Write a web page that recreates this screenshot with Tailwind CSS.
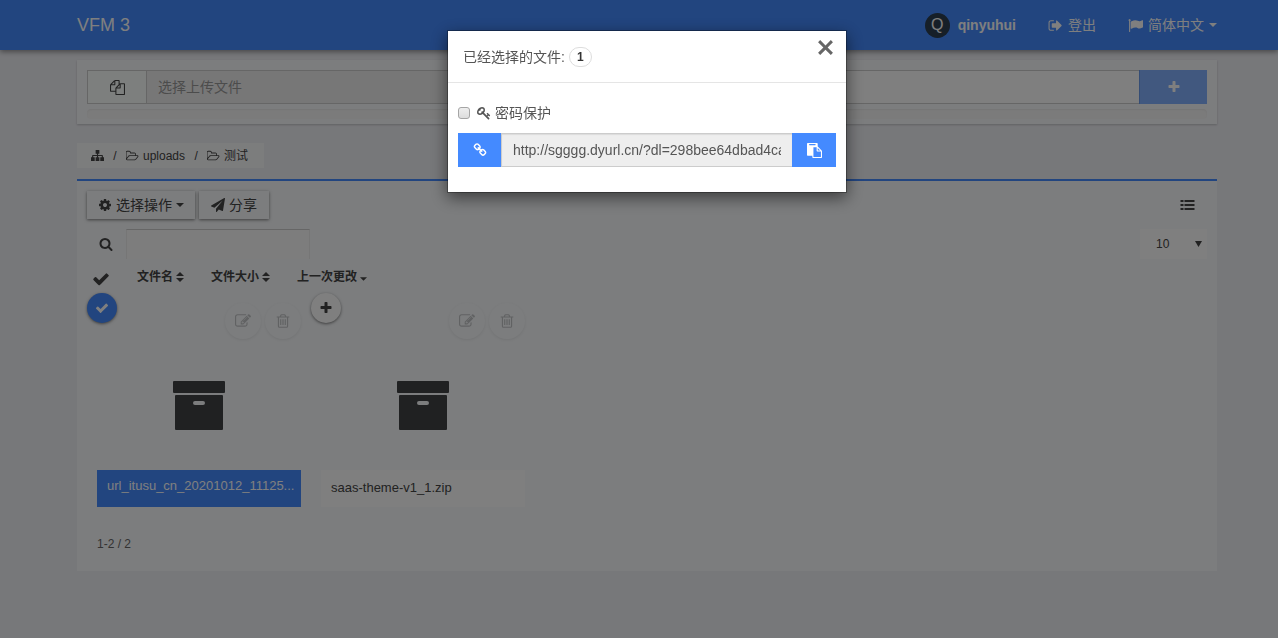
<!DOCTYPE html>
<html lang="zh-CN">
<head>
    <meta charset="UTF-8">
    <meta name="viewport" content="width=device-width, initial-scale=1.0">
    <title>VFM 3</title>
    <script src="https://cdn.jsdelivr.net/npm/@tailwindcss/browser@4"></script>
</head>
<body class="min-h-screen bg-[#eff0f5] fill-current font-['Liberation_Sans','Noto_Sans_CJK_SC',sans-serif] text-sm leading-5 text-[#444]">
    <!-- icons -->
    <svg class="hidden">
        <symbol id="plus" viewBox="0 0 1792 1792"><path d="M1600 736v192q0 40-28 68t-68 28h-416v416q0 40-28 68t-68 28h-192q-40 0-68-28t-28-68v-416h-416q-40 0-68-28t-28-68v-192q0-40 28-68t68-28h416v-416q0-40 28-68t68-28h192q40 0 68 28t28 68v416h416q40 0 68 28t28 68z"/></symbol>
        <symbol id="check" viewBox="0 0 1792 1792"><path d="M1671 566q0 40-28 68l-724 724-136 136q-28 28-68 28t-68-28l-136-136-362-362q-28-28-28-68t28-68l136-136q28-28 68-28t68 28l294 295 656-657q28-28 68-28t68 28l136 136q28 28 28 68z"/></symbol>
        <symbol id="times" viewBox="0 0 16 16"><path d="M3 1l5 5 5-5 2 2-5 5 5 5-2 2-5-5-5 5-2-2 5-5-5-5z"/></symbol>
        <symbol id="search" viewBox="0 0 1792 1792"><path d="M1216 832q0-185-131.500-316.500t-316.500-131.500-316.500 131.500-131.500 316.500 131.500 316.500 316.500 131.500 316.500-131.500 131.500-316.500zm512 832q0 52-38 90t-90 38q-54 0-90-38l-343-342q-179 124-399 124-143 0-273.500-55.500t-225-150-150-225-55.500-273.500 55.500-273.500 150-225 225-150 273.500-55.500 273.500 55.500 225 150 150 225 55.500 273.500q0 220-124 399l343 343q37 37 37 90z"/></symbol>
        <symbol id="cog" viewBox="0 0 1792 1792"><path d="M1152 896q0-106-75-181t-181-75-181 75-75 181 75 181 181 75 181-75 75-181zm512-109v222q0 12-8 23t-20 13l-185 28q-19 54-39 91 35 50 107 138 10 12 10 25t-9 23q-27 37-99 108t-94 71q-12 0-26-9l-138-108q-44 23-91 38-16 136-29 186-7 28-36 28h-222q-14 0-24.500-8.500t-11.500-21.500l-28-184q-49-16-90-37l-141 107q-10 9-25 9-14 0-25-11-126-114-165-168-7-10-7-23 0-12 8-23 15-21 51-66.500t54-70.500q-27-50-41-99l-183-27q-13-2-21-12.500t-8-23.500v-222q0-12 8-23t19-13l186-28q14-46 39-92-40-57-107-138-10-12-10-24 0-10 9-23 26-36 98.500-107.500t94.500-71.500q13 0 26 10l138 107q44-23 91-38 16-136 29-186 7-28 36-28h222q14 0 24.500 8.500t11.500 21.500l28 184q49 16 90 37l142-107q9-9 24-9 13 0 25 10 129 119 165 170 7 8 7 22 0 12-8 23-15 21-51 66.500t-54 70.500q26 50 41 98l183 28q13 2 21 12.500t8 23.500z"/></symbol>
        <symbol id="plane" viewBox="0 0 1792 1792"><path d="M1764 11q33 24 27 64l-256 1536q-5 29-32 45-14 8-31 8-11 0-24-5l-453-185-242 295q-18 23-49 23-13 0-22-4-19-7-30.500-23.500t-11.500-36.500v-349l864-1059-1069 925-395-162q-37-14-40-55-2-40 32-59l1664-960q15-9 32-9 20 0 36 11z"/></symbol>
        <symbol id="sign-out" viewBox="0 0 1792 1792"><path d="M704 1440q0 4 1 20t.5 26.500-3 23.500-10 19.500-20.500 6.500h-320q-119 0-203.500-84.500t-84.500-203.500v-704q0-119 84.500-203.500t203.500-84.500h320q13 0 22.500 9.500t9.500 22.500q0 4 1 20t.5 26.500-3 23.500-10 19.500-20.500 6.500h-320q-66 0-113 47t-47 113v704q0 66 47 113t113 47h312l11.500 1 11.500 3 8 5.500 7 9 2 13.500zm928-544q0 26-19 45l-544 544q-19 19-45 19t-45-19-19-45v-288h-448q-26 0-45-19t-19-45v-384q0-26 19-45t45-19h448v-288q0-26 19-45t45-19 45 19l544 544q19 19 19 45z"/></symbol>
        <symbol id="flag" viewBox="0 0 1792 1792"><path d="M320 256q0 72-64 110v1266q0 13-9.500 22.500t-22.500 9.500h-64q-13 0-22.500-9.500t-9.500-22.500v-1266q-64-38-64-110 0-53 37.500-90.500t90.500-37.500 90.500 37.500 37.500 90.500zm1472 64v763q0 25-12.500 38.500t-39.500 27.500q-215 116-369 116-61 0-123.500-22t-108.500-48-115.500-48-142.500-22q-192 0-464 146-17 9-33 9-26 0-45-19t-19-45v-742q0-32 31-55 21-14 79-43 236-120 421-120 107 0 200 29t219 88q38 19 88 19 54 0 117.500-21t110-47 88-47 54.500-21q26 0 45 19t19 45z"/></symbol>
        <symbol id="folder" viewBox="0 0 1920 1792"><path d="M1717 931q0-35-53-35h-1088q-40 0-85.500 21.500t-71.500 52.500l-294 363q-18 24-18 40 0 35 53 35h1088q40 0 86-22t71-53l294-363q18-22 18-39zm-1141-163h768v-160q0-40-28-68t-68-28h-576q-40 0-68-28t-28-68v-64q0-40-28-68t-68-28h-320q-40 0-68 28t-28 68v853l256-315q44-53 116-87.500t140-34.500zm1269 163q0 62-46 120l-295 363q-43 53-116 87.500t-140 34.500h-1088q-92 0-158-66t-66-158v-960q0-92 66-158t158-66h320q92 0 158 66t66 158v32h544q92 0 158 66t66 158v160h192q54 0 99 24.500t67 70.500q15 32 15 68z"/></symbol>
        <symbol id="files" viewBox="0 0 1792 1792"><path d="M1696 384q40 0 68 28t28 68v1216q0 40-28 68t-68 28h-960q-40 0-68-28t-28-68v-288h-544q-40 0-68-28t-28-68v-672q0-40 20-88t48-76l408-408q28-28 76-48t88-20h416q40 0 68 28t28 68v328q68-40 128-40h416zm-544 213l-299 299h299v-299zm-640-384l-299 299h299v-299zm196 647l316-316v-416h-384v416q0 40-28 68t-68 28h-416v640h512v-256q0-40 20-88t48-76zm956 804v-1152h-384v416q0 40-28 68t-68 28h-416v640h896z"/></symbol>
        <symbol id="link" viewBox="0 0 1792 1792"><path d="M1520 1216q0-40-28-68l-208-208q-28-28-68-28-42 0-72 32 3 3 19 18.500t21.500 21.500 15 19 13 25.500 3.500 27.500q0 40-28 68t-68 28q-15 0-27.500-3.500t-25.500-13-19-15-21.500-21.500-18.500-19q-33 31-33 73 0 40 28 68l206 207q27 27 68 27 40 0 68-26l147-146q28-28 28-67zm-703-705q0-40-28-68l-206-207q-28-28-68-28-39 0-68 27l-147 146q-28 28-28 67 0 40 28 68l208 208q27 27 68 27 42 0 72-31-3-3-19-18.500t-21.500-21.500-15-19-13-25.500-3.500-27.500q0-40 28-68t68-28q15 0 27.500 3.500t25.500 13 19 15 21.500 21.500 18.500 19q33-31 33-73zm895 705q0 120-85 203l-147 146q-83 83-203 83-121 0-204-85l-206-207q-83-83-83-203 0-123 88-209l-88-88q-86 88-208 88-120 0-204-84l-208-208q-84-84-84-204t85-203l147-146q83-83 203-83 121 0 204 85l206 207q83 83 83 203 0 123-88 209l88 88q86-88 208-88 120 0 204 84l208 208q84 84 84 204z"/></symbol>
        <symbol id="paste" viewBox="0 0 1792 1792"><path d="M768 1664h896v-640h-416q-40 0-68-28t-28-68v-416h-384v1152zm256-1440v-64q0-13-9.500-22.500t-22.500-9.500h-704q-13 0-22.500 9.500t-9.500 22.500v64q0 13 9.500 22.500t22.500 9.500h704q13 0 22.500-9.500t9.500-22.500zm256 672h299l-299-299v299zm512 128v672q0 40-28 68t-68 28h-960q-40 0-68-28t-28-68v-160h-544q-40 0-68-28t-28-68v-1344q0-40 28-68t68-28h1088q40 0 68 28t28 68v328q21 13 36 28l408 408q28 28 48 76t20 88z"/></symbol>
        <symbol id="key" viewBox="0 0 1792 1792"><path d="M832 512q0-80-56-136t-136-56-136 56-56 136q0 42 19 83-41-19-83-19-80 0-136 56t-56 136 56 136 136 56 136-56 56-136q0-42-19-83 41 19 83 19 80 0 136-56t56-136zm851 704q0 17-49 66t-66 49q-9 0-28.500-16t-36.500-33-38.500-40-24.500-26l-96 96 220 220q28 28 28 68 0 42-39 81t-81 39q-40 0-68-28l-671-671q-176 131-365 131-163 0-265.500-102.500t-102.500-265.500q0-160 95-313t248-248 313-95q163 0 265.500 102.500t102.500 265.500q0 189-131 365l355 355 96-96q-3-3-26-24.500t-40-38.500-33-36.500-16-28.500q0-17 49-66t66-49q13 0 23 10 6 6 46 44.500t82 79.500 86.500 86 73 78 28.500 41z"/></symbol>
        <symbol id="edit" viewBox="0 0 1792 1792"><path d="M888 1184l116-116-152-152-116 116v56h96v96h56zm440-720q-16-16-33 1l-350 350q-17 17-1 33t33-1l350-350q17-17 1-33zm80 594v190q0 119-84.500 203.500t-203.500 84.500h-832q-119 0-203.500-84.500t-84.500-203.500v-832q0-119 84.500-203.500t203.500-84.500h832q63 0 117 25 15 7 18 23 3 17-9 29l-49 49q-14 14-32 8-23-6-45-6h-832q-66 0-113 47t-47 113v832q0 66 47 113t113 47h832q66 0 113-47t47-113v-126q0-13 9-22l64-64q15-15 35-7t20 29zm-96-738l288 288-672 672h-288v-288zm444 132l-92 92-288-288 92-92q28-28 68-28t68 28l152 152q28 28 28 68t-28 68z"/></symbol>
        <symbol id="trash" viewBox="0 0 1792 1792"><path d="M704 736v576q0 14-9 23t-23 9h-64q-14 0-23-9t-9-23v-576q0-14 9-23t23-9h64q14 0 23 9t9 23zm256 0v576q0 14-9 23t-23 9h-64q-14 0-23-9t-9-23v-576q0-14 9-23t23-9h64q14 0 23 9t9 23zm256 0v576q0 14-9 23t-23 9h-64q-14 0-23-9t-9-23v-576q0-14 9-23t23-9h64q14 0 23 9t9 23zm128 724v-948h-896v948q0 22 7 40.500t14.500 27 10.500 8.500h832q3 0 10.500-8.500t14.500-27 7-40.500zm-672-1076h448l-48-117q-7-9-17-11h-317q-10 2-17 11zm928 32v64q0 14-9 23t-23 9h-96v948q0 83-47 143.500t-113 60.500h-832q-66 0-113-58.500t-47-141.500v-952h-96q-14 0-23-9t-9-23v-64q0-14 9-23t23-9h309l70-167q15-37 54-63t79-26h320q40 0 79 26t54 63l70 167h309q14 0 23 9t9 23z"/></symbol>
        <symbol id="sitemap" viewBox="0 0 14 14"><path d="M5 1h4v4H7.600v1.400h4.400q.8 0 .8.8V9H14v4h-4V9h1.600V7.600h-4V9H9v4H5V9h1.400V7.600h-4V9H4v4H0V9h1.200V7.200q0-.8.8-.8h4.400V5H5z"/></symbol>
        <symbol id="list" viewBox="0 0 14 12"><path d="M0 1h3v2H0zM4 1h10v2H4zM0 5h3v2H0zM4 5h10v2H4zM0 9h3v2H0zM4 9h10v2H4z"/></symbol>
        <symbol id="sort" viewBox="0 0 8 10"><path d="M4 0l4 4H0zM0 6h8l-4 4z"/></symbol>
        <symbol id="caret" viewBox="0 0 8 4"><path d="M0 0h8L4 4z"/></symbol>
        <symbol id="archive" viewBox="0 0 52 50"><rect width="52" height="12" rx="1"/><path fill-rule="evenodd" d="M3 14h46q1 0 1 1v33q0 1-1 1H3q-1 0-1-1V15q0-1 1-1zm19 6a2 2 0 0 0 0 4h8a2 2 0 0 0 0-4z"/></symbol>
    </svg>

    <nav class="h-[50px] bg-[#448aff] pl-4 text-white shadow-[0_2px_5px_rgba(0,0,0,0.4)]">
        <div class="mx-auto flex h-full max-w-[1140px] items-center">
            <a href="#" class="text-lg">VFM 3</a>
            <div class="ml-auto flex items-center gap-8">
                <a href="#" class="flex items-center gap-2 font-bold">
                    <span class="flex size-[25px] items-center justify-center rounded-full bg-[#2c3e50] text-base font-normal">Q</span>
                    qinyuhui
                </a>
                <a href="#" class="flex items-center gap-[5px]"><svg class="size-[15px] fill-current"><use href="#sign-out"/></svg>登出</a>
                <a href="#" class="flex items-center gap-[5px]"><svg class="size-[15px] fill-current"><use href="#flag"/></svg>简体中文<svg class="h-1 w-2 fill-current"><use href="#caret"/></svg></a>
            </div>
        </div>
    </nav>

    <main class="pt-[10px] pl-4">
        <div class="mx-auto max-w-[1140px]">
            <form class="bg-[#f9fafc] p-[10px] pb-[5px] shadow-[0_1px_2px_rgba(0,0,0,0.2)]">
                <div class="flex h-[34px]">
                    <button type="button" aria-label="选择文件" class="flex w-[60px] items-center justify-center border border-[#ccc] bg-[#fafffc]"><svg class="size-[15px] fill-current"><use href="#files"/></svg></button>
                    <input type="text" readonly aria-label="上传" placeholder="选择上传文件" class="min-w-0 flex-1 border-y border-[#ccc] bg-[#eee] px-[11px] placeholder:text-[#999]">
                    <input type="text" aria-label="新建文件夹" class="min-w-0 flex-1 border-y border-[#ccc] bg-white px-3">
                    <button type="button" aria-label="新建" class="flex w-[68px] items-center justify-center border-l border-[#6b9bea] bg-[#82b1ff] text-white"><svg class="size-[14px] fill-current"><use href="#plus"/></svg></button>
                </div>
                <div class="mt-[5px] h-[10px] rounded-sm bg-[#f7f7f7] shadow-[inset_0_1px_2px_rgba(0,0,0,0.06)]"></div>
            </form>

            <nav class="mt-[19px] mb-[11px] flex h-[25px] w-fit items-center bg-[#f9fafb] pr-4 pl-[14px] text-xs">
                <a href="#" aria-label="home"><svg class="size-[13px] fill-current"><use href="#sitemap"/></svg></a>
                <span class="w-[22px] text-center">/</span>
                <a href="#" class="flex items-center gap-1"><svg class="h-3 w-[13px] fill-current"><use href="#folder"/></svg>uploads</a>
                <span class="w-[22px] text-center">/</span>
                <a href="#" class="flex items-center gap-1"><svg class="h-3 w-[13px] fill-current"><use href="#folder"/></svg>测试</a>
            </nav>

            <section class="border-t-2 border-[#448aff] bg-[#f8fafc] px-[10px] pt-[10px] pb-[17px]">
                <div class="flex h-7 items-center gap-1">
                    <button type="button" class="flex h-full items-center gap-1 px-[11px] shadow-[0_1px_3px_rgba(0,0,0,0.5)]"><svg class="size-[14px] fill-current"><use href="#cog"/></svg>选择操作<svg class="h-1 w-2 fill-current"><use href="#caret"/></svg></button>
                    <button type="button" class="flex h-full items-center gap-1 px-3 shadow-[0_1px_3px_rgba(0,0,0,0.5)]"><svg class="size-[14px] fill-current"><use href="#plane"/></svg>分享</button>
                    <button type="button" aria-label="列表" class="mr-3 ml-auto"><svg class="h-3 w-[15px] fill-current"><use href="#list"/></svg></button>
                </div>

                <div class="mt-[10px] flex h-[30px] items-center">
                    <label for="search" class="pr-[13px] pl-3"><svg class="size-[14px] fill-current"><use href="#search"/></svg></label>
                    <input id="search" type="text" class="h-full w-[184px] border border-b-0 border-[#ececec] border-t-[#ccc] bg-[#fafafa] px-2">
                    <div class="ml-auto flex h-full w-[67px] items-center bg-[#fefefe] pr-[5px] pl-4 text-xs">
                        <select aria-label="每页" class="w-full appearance-none"><option>10</option></select>
                        <svg class="h-[6px] w-[7px] shrink-0 fill-current" viewBox="0 0 7 6"><path d="M0 0h7L3.500 6z"/></svg>
                    </div>
                </div>

                <div class="mt-[3px] mb-px flex h-[30px] items-center gap-[27px] pl-[5px] text-xs font-bold">
                    <button type="button" aria-label="全选"><svg class="mt-1 size-[18px] fill-current"><use href="#check"/></svg></button>
                    <button type="button" class="flex items-center gap-[3px]">文件名<svg class="h-[10px] w-2 fill-current"><use href="#sort"/></svg></button>
                    <button type="button" class="flex items-center gap-[3px]">文件大小<svg class="h-[10px] w-2 fill-current"><use href="#sort"/></svg></button>
                    <button type="button" class="flex items-center gap-[3px]">上一次更改<svg class="mt-1 h-1 w-[7px] fill-current"><use href="#caret"/></svg></button>
                </div>

                <div class="flex flex-wrap">
                    <article class="w-56">
                        <div class="flex items-start gap-1 pr-[10px]">
                            <button type="button" aria-label="已选择" class="mr-auto flex size-[30px] items-center justify-center rounded-full bg-[#448aff] text-white shadow-[0_1px_3px_rgba(0,0,0,0.5)]"><svg class="size-[14px] fill-current"><use href="#check"/></svg></button>
                            <button type="button" aria-label="编辑" class="mt-[10px] flex size-9 items-center justify-center rounded-full fill-[#c2c4c6] shadow-[0_1px_3px_rgba(0,0,0,0.08)]"><svg class="size-4"><use href="#edit"/></svg></button>
                            <button type="button" aria-label="删除" class="mt-[10px] flex size-9 items-center justify-center rounded-full fill-[#c2c4c6] shadow-[0_1px_3px_rgba(0,0,0,0.08)]"><svg class="size-4"><use href="#trash"/></svg></button>
                        </div>
                        <svg class="mx-auto mt-[42px] h-[50px] w-[52px] fill-[#414244]"><use href="#archive"/></svg>
                        <a href="#" class="mx-[10px] mt-[39px] block h-[37px] bg-[#448aff] px-[10px] py-[6px] text-[13px] whitespace-nowrap text-white">url_itusu_cn_20201012_11125...</a>
                    </article>
                    <article class="w-56">
                        <div class="flex items-start gap-1 pr-[10px]">
                            <button type="button" aria-label="选择" class="mr-auto flex size-[30px] items-center justify-center rounded-full bg-[#fefefe] shadow-[0_1px_3px_rgba(0,0,0,0.5)]"><svg class="size-[14px] fill-current"><use href="#plus"/></svg></button>
                            <button type="button" aria-label="编辑" class="mt-[10px] flex size-9 items-center justify-center rounded-full fill-[#c2c4c6] shadow-[0_1px_3px_rgba(0,0,0,0.08)]"><svg class="size-4"><use href="#edit"/></svg></button>
                            <button type="button" aria-label="删除" class="mt-[10px] flex size-9 items-center justify-center rounded-full fill-[#c2c4c6] shadow-[0_1px_3px_rgba(0,0,0,0.08)]"><svg class="size-4"><use href="#trash"/></svg></button>
                        </div>
                        <svg class="mx-auto mt-[42px] h-[50px] w-[52px] fill-[#414244]"><use href="#archive"/></svg>
                        <a href="#" class="mx-[10px] mt-[39px] block h-[37px] truncate bg-white px-[10px] py-2 text-[13px]">saas-theme-v1_1.zip</a>
                    </article>
                </div>
                <p class="mt-[27px] pl-[10px] text-xs leading-5 text-[#666]">1-2 / 2</p>
            </section>
        </div>
    </main>

    <!-- share dialog -->
    <div class="fixed inset-0 flex items-start justify-center bg-black/50 pt-[30px] pl-4">
        <div role="dialog" aria-labelledby="dialog-title" class="w-full max-w-[400px] border border-black/30 bg-white bg-clip-padding text-[#555] shadow-[0_5px_15px_rgba(0,0,0,0.5)]">
            <div class="flex h-[52px] items-start border-b border-[#e5e5e5] pr-3 pl-[15px]">
                <h5 id="dialog-title" class="mt-4 flex items-center gap-1">已经选择的文件: <span class="rounded-full border border-[#ddd] px-[7px] text-xs leading-[18px] font-bold text-[#333]">1</span></h5>
                <button type="button" aria-label="关闭" class="mt-2 ml-auto"><svg class="size-[17px] fill-[#666]"><use href="#times"/></svg></button>
            </div>
            <div class="px-[10px] pt-5 pb-[25px]">
                <label class="flex h-5 items-center">
                    <input type="checkbox" class="mr-[7px] size-3 appearance-none rounded-[3px] border border-[#a5a5a5] bg-linear-to-b from-[#eee] to-[#ddd]">
                    <svg class="mr-1 size-[14px] fill-current"><use href="#key"/></svg>密码保护
                </label>
                <div class="mt-[10px] flex h-[34px]">
                    <button type="button" aria-label="链接" class="flex w-[43px] items-center justify-center bg-[#448aff] text-white"><svg class="size-[14px] fill-current"><use href="#link"/></svg></button>
                    <input type="text" readonly aria-label="下载链接" value="http://sgggg.dyurl.cn/?dl=298bee64dbad4ca8" class="min-w-0 flex-1 border border-r-0 border-[#ccc] bg-[#eee] px-[11px] shadow-[inset_0_1px_1px_rgba(0,0,0,0.08)]">
                    <button type="button" aria-label="复制" class="flex w-11 items-center justify-center bg-[#448aff] text-white"><svg class="size-[15px] fill-current"><use href="#paste"/></svg></button>
                </div>
            </div>
        </div>
    </div>
</body>
</html>
